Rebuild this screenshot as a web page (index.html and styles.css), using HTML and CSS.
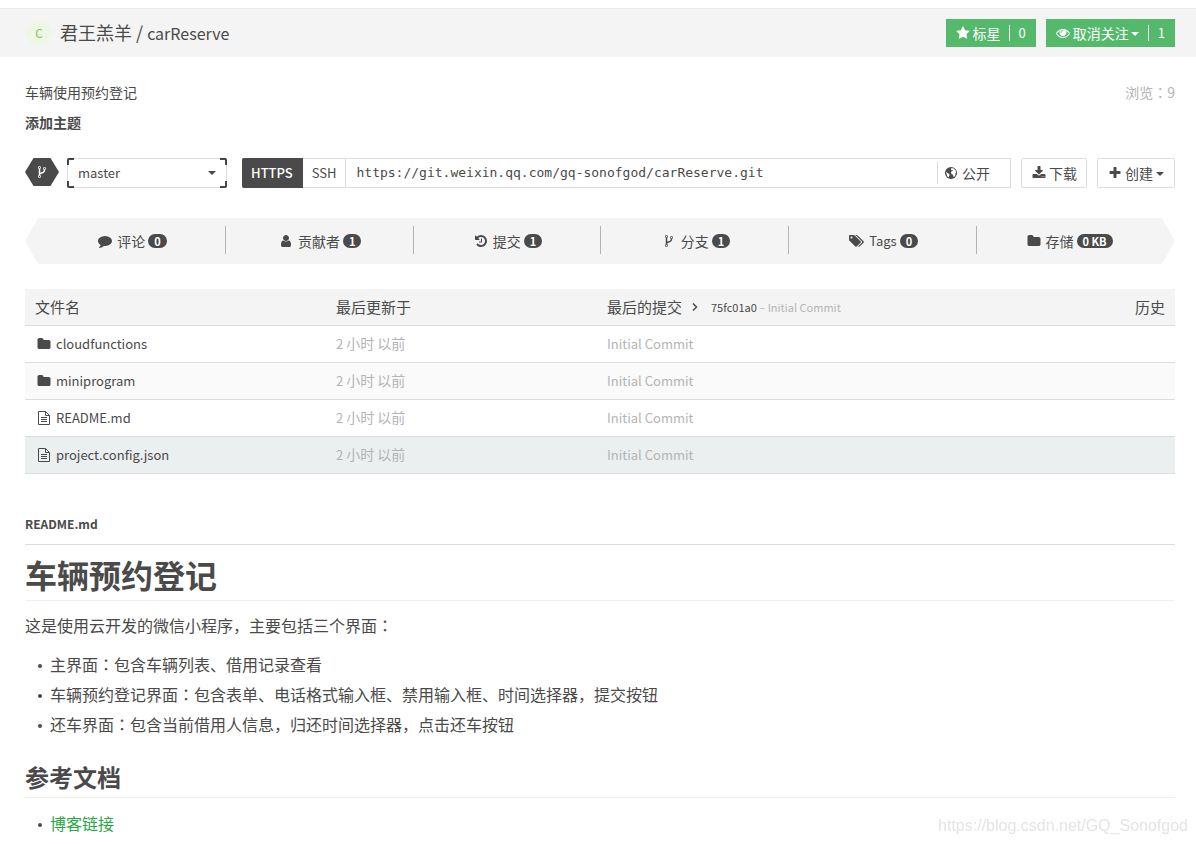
FILE: index.html
```html
<!DOCTYPE html>
<html lang="zh-CN">
<head>
<meta charset="utf-8">
<title>君王羔羊 / carReserve</title>
<link rel="stylesheet" href="styles.css">
</head>
<body>
<svg class="sprite" aria-hidden="true">
  <symbol id="star" viewBox="0 0 1792 1792"><path d="M1728 647q0 22-26 48l-363 354 86 500q1 7 1 20 0 21-10.5 35.5t-30.5 14.5q-19 0-40-12l-449-236-449 236q-22 12-40 12-21 0-31.5-14.5t-10.5-35.5q0-6 2-20l86-500-364-354q-25-27-25-48 0-37 56-46l502-73 225-455q19-41 49-41t49 41l225 455 502 73q56 9 56 46z"/></symbol>
  <symbol id="eye" viewBox="0 0 1792 1792"><path d="M1664 960q-152-236-381-353 61 104 61 225 0 185-131.500 316.500t-316.500 131.500-316.500-131.500-131.500-316.500q0-121 61-225-229 117-381 353 133 205 333.500 326.500t434.500 121.500 434.500-121.500 333.500-326.500zm-720-384q0-20-14-34t-34-14q-125 0-214.500 89.500t-89.500 214.500q0 20 14 34t34 14 34-14 14-34q0-86 61-147t147-61q20 0 34-14t14-34zm848 384q0 34-20 69-140 230-376.500 368.500t-499.500 138.500-499.500-139-376.500-368q-20-35-20-69t20-69q140-229 376.500-368t499.500-139 499.500 139 376.500 368q20 35 20 69z"/></symbol>
  <symbol id="fork" viewBox="0 0 1792 1792"><path d="M672 1472q0-40-28-68t-68-28-68 28-28 68 28 68 68 28 68-28 28-68zm0-1152q0-40-28-68t-68-28-68 28-28 68 28 68 68 28 68-28 28-68zm640 128q0-40-28-68t-68-28-68 28-28 68 28 68 68 28 68-28 28-68zm96 0q0 52-26 96.500t-70 69.500q-2 287-226 414-67 38-203 81-128 40-169.500 71t-41.500 100v26q44 25 70 69.500t26 96.500q0 80-56 136t-136 56-136-56-56-136q0-52 26-96.500t70-69.500v-820q-44-25-70-69.500t-26-96.500q0-80 56-136t136-56 136 56 56 136q0 52-26 96.500t-70 69.500v497q54-26 154-57 55-17 87.500-29.500t70.500-31 59-39.500 40.500-51 28-69.500 8.500-91.500q-44-25-70-69.500t-26-96.500q0-80 56-136t136-56 136 56 56 136z"/></symbol>
  <symbol id="comment" viewBox="0 0 1792 1792"><path d="M1792 896q0 174-120 321.500t-326 233-450 85.500q-70 0-145-8-198 175-460 242-49 14-114 22-17 2-30.500-9t-17.500-29v-1q-3-4-.5-12t2-10 4.500-9.500l6-9 7-8.500 8-9q7-8 31-34.500t34.500-38 31-39.500 32.500-51 27-59 26-76q-157-89-247.500-220t-90.500-281q0-130 71-248.500t191-204.500 286-136.500 348-50.500q244 0 450 85.500t326 233 120 321.500z"/></symbol>
  <symbol id="user" viewBox="0 0 1792 1792"><path d="M1536 1399q0 109-62.500 187t-150.500 78h-854q-88 0-150.500-78t-62.500-187q0-85 8.500-160.500t31.500-152 58.500-131 94-89 134.500-34.500q131 128 313 128t313-128q76 0 134.500 34.500t94 89 58.500 131 31.500 152 8.500 160.500zm-256-887q0 159-112.500 271.500t-271.500 112.500-271.500-112.500-112.500-271.500 112.500-271.500 271.500-112.500 271.500 112.500 112.500 271.500z"/></symbol>
  <symbol id="history" viewBox="0 0 1792 1792"><path d="M1664 896q0 156-61 298t-164 245-245 164-298 61q-172 0-327-72.500t-264-204.500q-7-10-6.500-22.500t8.500-20.500l137-138q10-9 25-9 16 2 23 12 73 95 179 147t225 52q104 0 198.500-40.500t163.500-109.500 109.500-163.500 40.500-198.500-40.500-198.500-109.500-163.500-163.500-109.500-198.500-40.500q-98 0-188 35.500t-160 101.500l137 138q31 30 14 69-17 40-59 40h-448q-26 0-45-19t-19-45v-448q0-42 40-59 39-17 69 14l130 129q107-101 244.500-156.500t284.500-55.500q156 0 298 61t245 164 164 245 61 298zm-640-288v448q0 14-9 23t-23 9h-320q-14 0-23-9t-9-23v-64q0-14 9-23t23-9h224v-352q0-14 9-23t23-9h64q14 0 23 9t9 23z"/></symbol>
  <symbol id="tags" viewBox="0 0 1920 1792"><path d="M448 448q0-53-37.500-90.500t-90.500-37.500-90.500 37.500-37.500 90.500 37.500 90.500 90.500 37.500 90.500-37.500 37.500-90.500zm1067 576q0 53-37 90l-491 492q-39 37-91 37-53 0-90-37l-715-716q-38-37-64.500-101t-26.500-117v-416q0-52 38-90t90-38h416q53 0 117 26.500t102 64.500l715 714q37 39 37 91zm384 0q0 53-37 90l-491 492q-39 37-91 37-36 0-59-14t-53-45l470-470q37-37 37-90 0-52-37-91l-715-714q-38-38-102-64.500t-117-26.500h224q53 0 117 26.500t102 64.500l715 714q37 39 37 91z"/></symbol>
  <symbol id="folder" viewBox="0 0 1792 1792"><path d="M1728 608v704q0 92-66 158t-158 66h-1216q-92 0-158-66t-66-158v-960q0-92 66-158t158-66h320q92 0 158 66t66 158v32h672q92 0 158 66t66 158z"/></symbol>
  <symbol id="download" viewBox="0 0 1792 1792"><path d="M1344 1344q0-26-19-45t-45-19-45 19-19 45 19 45 45 19 45-19 19-45zm256 0q0-26-19-45t-45-19-45 19-19 45 19 45 45 19 45-19 19-45zm128-224v320q0 40-28 68t-68 28h-1472q-40 0-68-28t-28-68v-320q0-40 28-68t68-28h465l135 136q58 56 136 56t136-56l136-136h464q40 0 68 28t28 68zm-325-569q17 41-14 70l-448 448q-18 19-45 19t-45-19l-448-448q-31-29-14-70 17-39 59-39h256v-448q0-26 19-45t45-19h256q26 0 45 19t19 45v448h256q42 0 59 39z"/></symbol>
  <symbol id="plus" viewBox="0 0 1792 1792"><path d="M1600 736v192q0 40-28 68t-68 28h-416v416q0 40-28 68t-68 28h-192q-40 0-68-28t-28-68v-416h-416q-40 0-68-28t-28-68v-192q0-40 28-68t68-28h416v-416q0-40 28-68t68-28h192q40 0 68 28t28 68v416h416q40 0 68 28t28 68z"/></symbol>
  <symbol id="globe" viewBox="0 0 14 14"><circle cx="7" cy="7" r="6"/><path fill="#fff" d="M7.500 2l2.300.6 1.700 1.700.6 2.200-.8.900.2 1.600-1.300 1.900-.9-.3-.3-1.900-1.500-.6-.6-1.600.9-1.400 1.300-.3-.5-.8-1 .2-.7-.8zM2 6l2.200 1.300 1.600 1.600-.8 1.300-.2 1.300-1.500-1.200z"/></symbol>
  <symbol id="file" viewBox="0 0 14 16"><path fill="none" stroke="currentColor" d="M1.500 1.500h7l4 4v9h-11zM8.500 1.500v4h4M4 7.500h6M4 9.500h6M4 11.500h6"/></symbol>
</svg>

<header class="topbar">
  <span class="avatar">C</span>
  <h1 class="repo-title"><a href="#">君王羔羊</a> / <a href="#">carReserve</a></h1>
  <div class="topbar-actions">
    <button class="btn-green" type="button"><svg class="icon"><use href="#star"/></svg><span>标星</span><span class="count">0</span></button>
    <button class="btn-green" type="button"><svg class="icon"><use href="#eye"/></svg><span>取消关注</span><i class="caret"></i><span class="count">1</span></button>
  </div>
</header>

<main class="page">
  <div class="summary"><p>车辆使用预约登记</p><p class="muted">浏览<span class="colon" lang="zh-TW">：</span>9</p></div>
  <a class="add-topic" href="#">添加主题</a>

  <div class="toolbar">
    <span class="branch-icon"><svg class="icon"><use href="#fork"/></svg></span>
    <div class="branch">
      <select aria-label="分支"><option>master</option></select>
      <i class="caret"></i>
    </div>
    <div class="clone">
      <button class="proto proto-on" type="button">HTTPS</button>
      <button class="proto" type="button">SSH</button>
      <input class="url" type="text" aria-label="仓库地址" readonly value="https://git.weixin.qq.com/gq-sonofgod/carReserve.git">
      <span class="visibility"><svg class="icon"><use href="#globe"/></svg>公开</span>
    </div>
    <button class="btn" type="button"><svg class="icon"><use href="#download"/></svg>下载</button>
    <button class="btn btn-create" type="button"><svg class="icon"><use href="#plus"/></svg>创建<i class="caret"></i></button>
  </div>

  <nav class="stats">
    <a href="#"><svg class="icon"><use href="#comment"/></svg>评论<b>0</b></a>
    <a href="#"><svg class="icon"><use href="#user"/></svg>贡献者<b>1</b></a>
    <a href="#"><svg class="icon"><use href="#history"/></svg>提交<b>1</b></a>
    <a href="#"><svg class="icon"><use href="#fork"/></svg>分支<b>1</b></a>
    <a href="#"><svg class="icon icon-wide"><use href="#tags"/></svg><span class="latin">Tags</span><b>0</b></a>
    <a href="#"><svg class="icon"><use href="#folder"/></svg>存储<b>0 KB</b></a>
  </nav>

  <table class="files">
    <thead>
      <tr>
        <th class="col-name">文件名</th>
        <th class="col-time">最后更新于</th>
        <th><div class="last-commit">最后的提交<svg class="chevron" viewBox="0 0 6 10"><path d="M1 1.500l3.500 3.500-3.500 3.500"/></svg><span class="hash"><a href="#">75fc01a0</a> – Initial Commit</span><a class="history-link" href="#">历史</a></div></th>
      </tr>
    </thead>
    <tbody>
      <tr><td><a class="file" href="#"><svg class="icon"><use href="#folder"/></svg>cloudfunctions</a></td><td>2 <span class="cjk">小时 以前</span></td><td>Initial Commit</td></tr>
      <tr class="alt"><td><a class="file" href="#"><svg class="icon"><use href="#folder"/></svg>miniprogram</a></td><td>2 <span class="cjk">小时 以前</span></td><td>Initial Commit</td></tr>
      <tr><td><a class="file" href="#"><svg class="icon icon-file"><use href="#file"/></svg>README.md</a></td><td>2 <span class="cjk">小时 以前</span></td><td>Initial Commit</td></tr>
      <tr class="hover"><td><a class="file" href="#"><svg class="icon icon-file"><use href="#file"/></svg>project.config.json</a></td><td>2 <span class="cjk">小时 以前</span></td><td>Initial Commit</td></tr>
    </tbody>
  </table>

  <article class="readme">
    <div class="readme-name">README.md</div>
    <h1>车辆预约登记</h1>
    <p>这是使用云开发的微信小程序，主要包括三个界面<span class="colon" lang="zh-TW">：</span></p>
    <ul>
      <li>主界面<span class="colon" lang="zh-TW">：</span>包含车辆列表、借用记录查看</li>
      <li>车辆预约登记界面<span class="colon" lang="zh-TW">：</span>包含表单、电话格式输入框、禁用输入框、时间选择器，提交按钮</li>
      <li>还车界面<span class="colon" lang="zh-TW">：</span>包含当前借用人信息，归还时间选择器，点击还车按钮</li>
    </ul>
    <h2>参考文档</h2>
    <ul><li><a class="link" href="#">博客链接</a></li></ul>
  </article>
</main>
<div class="watermark">https://blog.csdn.net/GQ_Sonofgod</div>
</body>
</html>
```
FILE: styles.css
```css
* { box-sizing: border-box; }
body {
  margin: 0;
  padding-top: 8px;
  background: #fff;
  color: #4a4a4a;
  font: 14px/20px "Noto Sans CJK SC", sans-serif;
}
h1, h2, p, ul { margin: 0; padding: 0; font-weight: 400; }
a { color: inherit; text-decoration: none; }
button, input, select { font: inherit; color: inherit; margin: 0; }
.sprite { position: absolute; width: 0; height: 0; }
.icon { width: 14px; height: 14px; fill: currentColor; flex: none; }
.caret {
  margin-top: 2px;
  border: 4px solid transparent;
  border-top-color: currentColor;
  border-bottom: 0;
  flex: none;
}
.colon { font-family: "Noto Sans CJK TC", sans-serif; }
.muted { color: #b4b4b4; }

.topbar {
  display: flex;
  align-items: center;
  height: 49px;
  padding: 0 21px 0 25px;
  background: #f4f4f4;
  border-top: 1px solid #e9e9e9;
}
.avatar {
  width: 28px;
  height: 24px;
  background: #eef6e6;
  color: #8bc34a;
  font-size: 12px;
  line-height: 24px;
  text-align: center;
  clip-path: polygon(25% 0, 75% 0, 100% 50%, 75% 100%, 25% 100%, 0 50%);
}
.repo-title { margin-left: 7px; padding-bottom: 2px; font-size: 18px; line-height: 28px; }
.repo-title a:last-child { font-size: 16px; }
.topbar-actions { display: flex; gap: 10px; margin-left: auto; }
.btn-green {
  display: flex;
  align-items: center;
  gap: 3px;
  height: 28px;
  padding: 0 10px 1px;
  border: 0;
  background: #55b96b;
  color: #fff;
}
.btn-green .caret { margin-right: 1px; margin-left: -1px; }
.count {
  margin-left: 5px;
  padding-left: 9px;
  border-left: 1px solid #fff;
  font-size: 13px;
  line-height: 16px;
}

.page { padding: 25px 21px 0 25px; }
.summary { display: flex; justify-content: space-between; }
.add-topic { display: inline-block; margin-top: 10px; font-weight: 700; }

.toolbar { display: flex; margin-top: 26px; height: 30px; }
.branch-icon {
  display: flex;
  align-items: center;
  justify-content: center;
  width: 34px;
  height: 28px;
  background: #4a4a4a;
  color: #fff;
  clip-path: polygon(25% 0, 75% 0, 100% 50%, 75% 100%, 25% 100%, 0 50%);
}
.branch {
  display: flex;
  align-items: center;
  width: 160px;
  margin: 0 15px 0 8px;
  border: 1px solid rgba(0, 0, 0, .13);
  border-radius: 2px;
  --c: linear-gradient(#4a4a4a, #4a4a4a);
  background:
    var(--c) 0 0 / 7px 2px, var(--c) 0 0 / 2px 7px,
    var(--c) 100% 0 / 7px 2px, var(--c) 100% 0 / 2px 7px,
    var(--c) 0 100% / 7px 2px, var(--c) 0 100% / 2px 7px,
    var(--c) 100% 100% / 7px 2px, var(--c) 100% 100% / 2px 7px;
  background-repeat: no-repeat;
  background-origin: border-box;
}
.branch select {
  flex: 1;
  min-width: 0;
  height: 24px;
  padding: 0 0 0 10px;
  border: 0;
  background: none;
  appearance: none;
  font-size: 13px;
}
.branch .caret { margin-top: 0; margin-right: 10px; }
.clone { display: flex; flex: 1; min-width: 0; border: 1px solid #ddd; margin-right: 10px; }
.proto { padding: 0 9px; border: 0; border-right: 1px solid #ddd; background: #fff; font-size: 13px; }
.proto-on {
  margin: -1px 0 -1px -1px;
  background: #4a4a4a;
  border-color: #4a4a4a;
  color: #fff;
  border-radius: 2px 0 0 2px;
  font-weight: 500;
}
.url {
  flex: 1;
  min-width: 0;
  padding: 0 10px;
  border: 0;
  background: none;
  font-family: "DejaVu Sans Mono", monospace;
  font-size: 13px;
}
.visibility {
  display: flex;
  align-items: center;
  gap: 4px;
  margin: 3px 0;
  padding: 0 20px 0 6px;
  border-left: 1px solid #ddd;
}
.btn {
  display: flex;
  align-items: center;
  gap: 3px;
  padding: 0 9px 1px 10px;
  border: 1px solid #ddd;
  border-radius: 2px;
  background: #fff;
}
.btn-create { margin-left: 10px; padding: 0 10px 1px; }

.stats {
  display: flex;
  height: 46px;
  margin-top: 30px;
  padding: 8px 13px;
  background: #f4f4f4;
  clip-path: polygon(13px 0, calc(100% - 13px) 0, 100% 50%, calc(100% - 13px) 100%, 13px 100%, 0 50%);
}
.stats a {
  display: flex;
  flex: 1;
  align-items: center;
  justify-content: center;
  height: 28px;
  padding-top: 2px;
  padding-left: 2px;
  border-right: 1px solid #b4b4b4;
}
.stats a:last-child { border: 0; padding-left: 0; }
.stats .icon { margin-right: 5px; }
.stats .icon-wide { width: 15px; }
.stats .latin { font-size: 13px; }
.stats b {
  margin-left: 3px;
  padding: 0 6px;
  border-radius: 7px;
  background: #4a4a4a;
  color: #fff;
  font-size: 11px;
  line-height: 14px;
}

.files { width: 100%; margin-top: 25px; border-collapse: collapse; table-layout: fixed; }
.files th, .files td {
  height: 37px;
  padding: 0 10px;
  border-bottom: 1px solid #ddd;
  text-align: left;
  font-weight: 400;
}
.files th { height: 36px; background: #f4f4f4; font-size: 15px; }
.files td { color: #b4b4b4; font-size: 13px; }
.files .cjk { font-size: 14px; }
.col-name { width: 301px; }
.col-time { width: 271px; }
.last-commit { display: flex; align-items: center; }
.chevron { width: 6px; height: 10px; margin: 0 13px 0 10px; fill: none; stroke: #4a4a4a; stroke-width: 1.500; }
.hash { color: #b4b4b4; font-size: 11px; }
.hash a { color: #4a4a4a; }
.history-link { margin-left: auto; }
.file { display: flex; align-items: center; gap: 5px; padding-left: 2px; color: #4a4a4a; }
.icon-file { height: 16px; }
.alt { background: #fafafa; }
.hover { background: #ebeff0; }

.readme { margin-top: 40px; font-size: 16px; line-height: 30px; }
.readme-name { padding-bottom: 10px; border-bottom: 1px solid #ddd; font-size: 12px; font-weight: 700; line-height: 20px; }
.readme h1, .readme h2 { border-bottom: 1px solid #eee; font-weight: 700; }
.readme h1 { padding: 9px 0 6px; font-size: 32px; line-height: 40px; }
.readme p { margin: 9px 0; }
.readme ul { padding-left: 25px; list-style: none; }
.readme li::before {
  content: "";
  display: inline-block;
  width: 4px;
  height: 4px;
  margin: 0 8px 3px -12px;
  border-radius: 50%;
  background: currentColor;
}
.readme h2 { margin-top: 23px; margin-bottom: 10px; padding-bottom: 5px; font-size: 24px; line-height: 30px; }
.link { color: #28a745; }

.watermark {
  position: fixed;
  right: 8px;
  bottom: 8px;
  color: #e4e4e4;
  font: 16px/20px "Liberation Sans", sans-serif;
}
```
